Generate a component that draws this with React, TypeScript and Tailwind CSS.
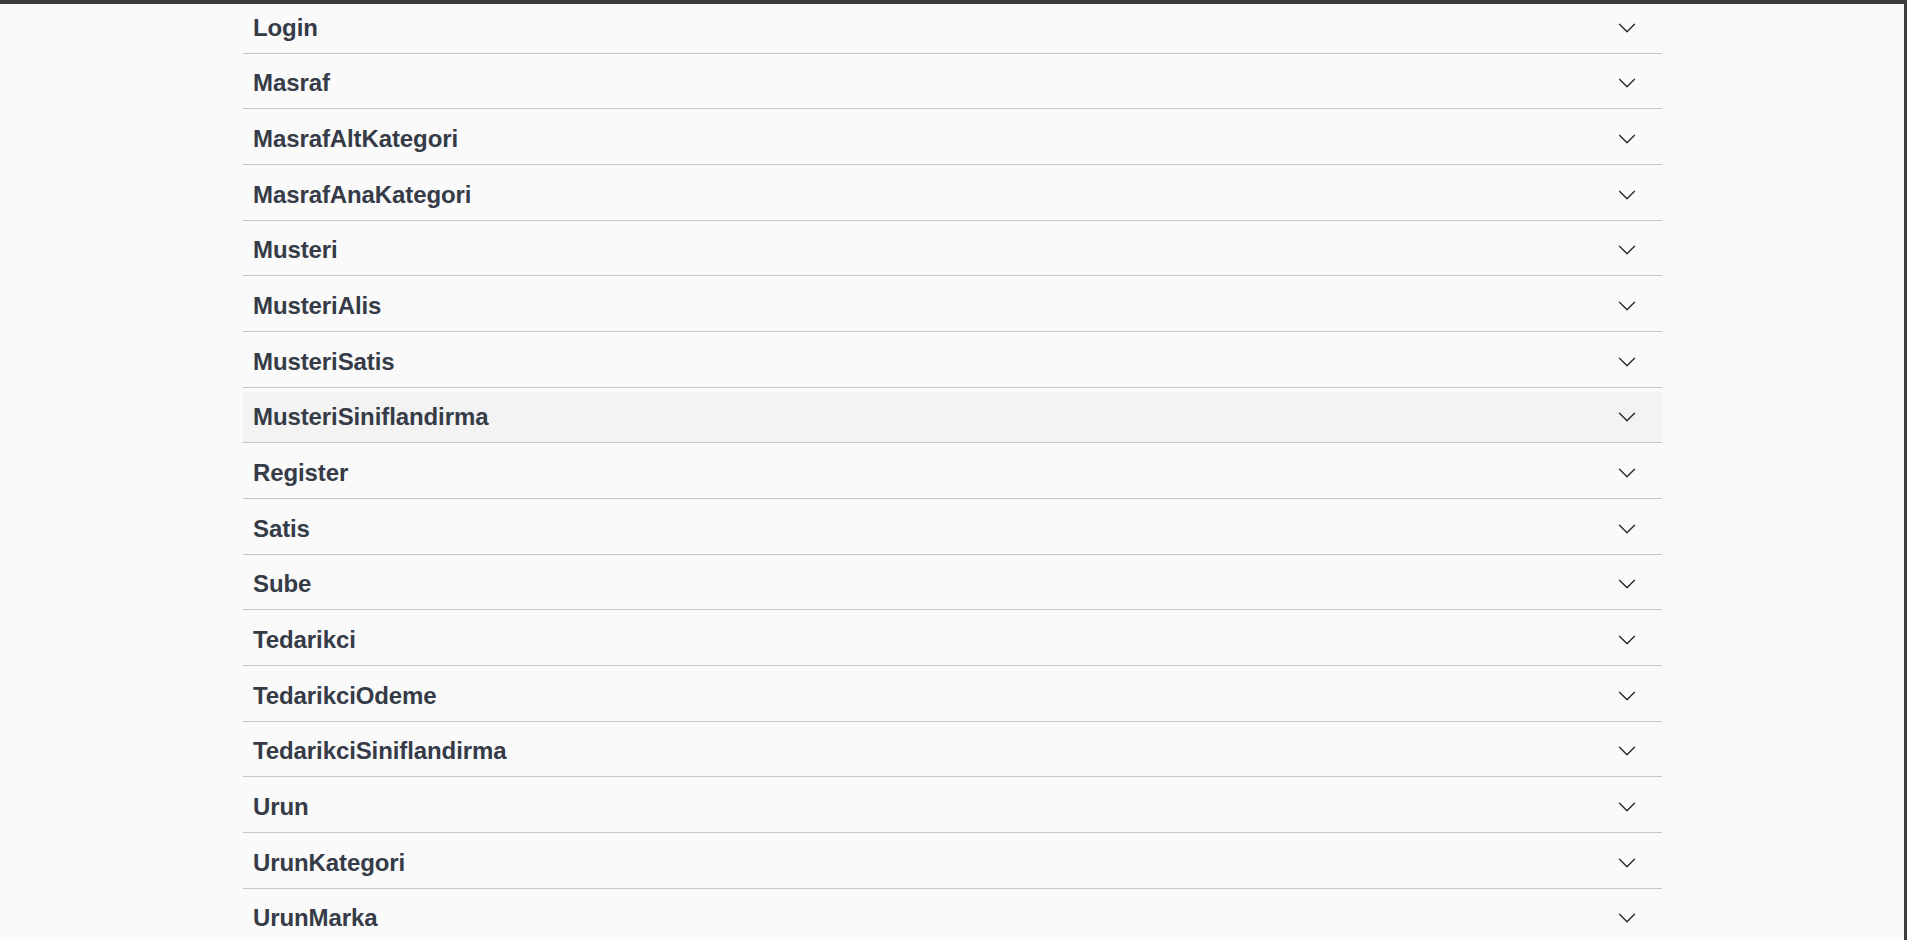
import React from "react";

const tables = [
  "Login",
  "Masraf",
  "MasrafAltKategori",
  "MasrafAnaKategori",
  "Musteri",
  "MusteriAlis",
  "MusteriSatis",
  "MusteriSiniflandirma",
  "Register",
  "Satis",
  "Sube",
  "Tedarikci",
  "TedarikciOdeme",
  "TedarikciSiniflandirma",
  "Urun",
  "UrunKategori",
  "UrunMarka",
];

const Chevron = () => (
  <svg width="20" height="20" viewBox="0 0 16 16" fill="#212529">
    <path
      fillRule="evenodd"
      d="M1.646 4.646a.5.5 0 0 1 .708 0L8 10.293l5.646-5.647a.5.5 0 0 1 .708.708l-6 6a.5.5 0 0 1-.708 0l-6-6a.5.5 0 0 1 0-.708z"
    />
  </svg>
);

const AccordionItem = ({ name, hovered }: { name: string; hovered?: boolean }) => {
  return (
    <div className="border-b border-[#c6c6c6] pt-[4.67px]">
      <button
        className={
          "w-full h-[50px] flex items-center justify-between pl-[10px] pr-[25px] text-left " +
          (hovered ? "bg-[#f3f3f3]" : "bg-transparent")
        }
      >
        <span className="text-[24px] font-bold text-[#353b47] leading-none tracking-[-0.1px]">{name}</span>
        <Chevron />
      </button>
    </div>
  );
};

const App = () => {
  return (
    <div
      className="w-full h-screen overflow-hidden bg-[#fafafa] flex"
      style={{ fontFamily: '"Liberation Sans", Arial, sans-serif' }}
    >
      <div className="flex-1 flex flex-col">
        <div className="relative z-10 h-[4px] bg-[#3c3c3c] shrink-0" />
        <div className="w-[1419px] ml-[243px] -mt-[6px] flex flex-col">
          {tables.map((t) => (
            <AccordionItem key={t} name={t} hovered={t === "MusteriSiniflandirma"} />
          ))}
        </div>
      </div>
      <div className="w-[3px] bg-[#3c3c3c] shrink-0" />
    </div>
  );
};

export default App;
